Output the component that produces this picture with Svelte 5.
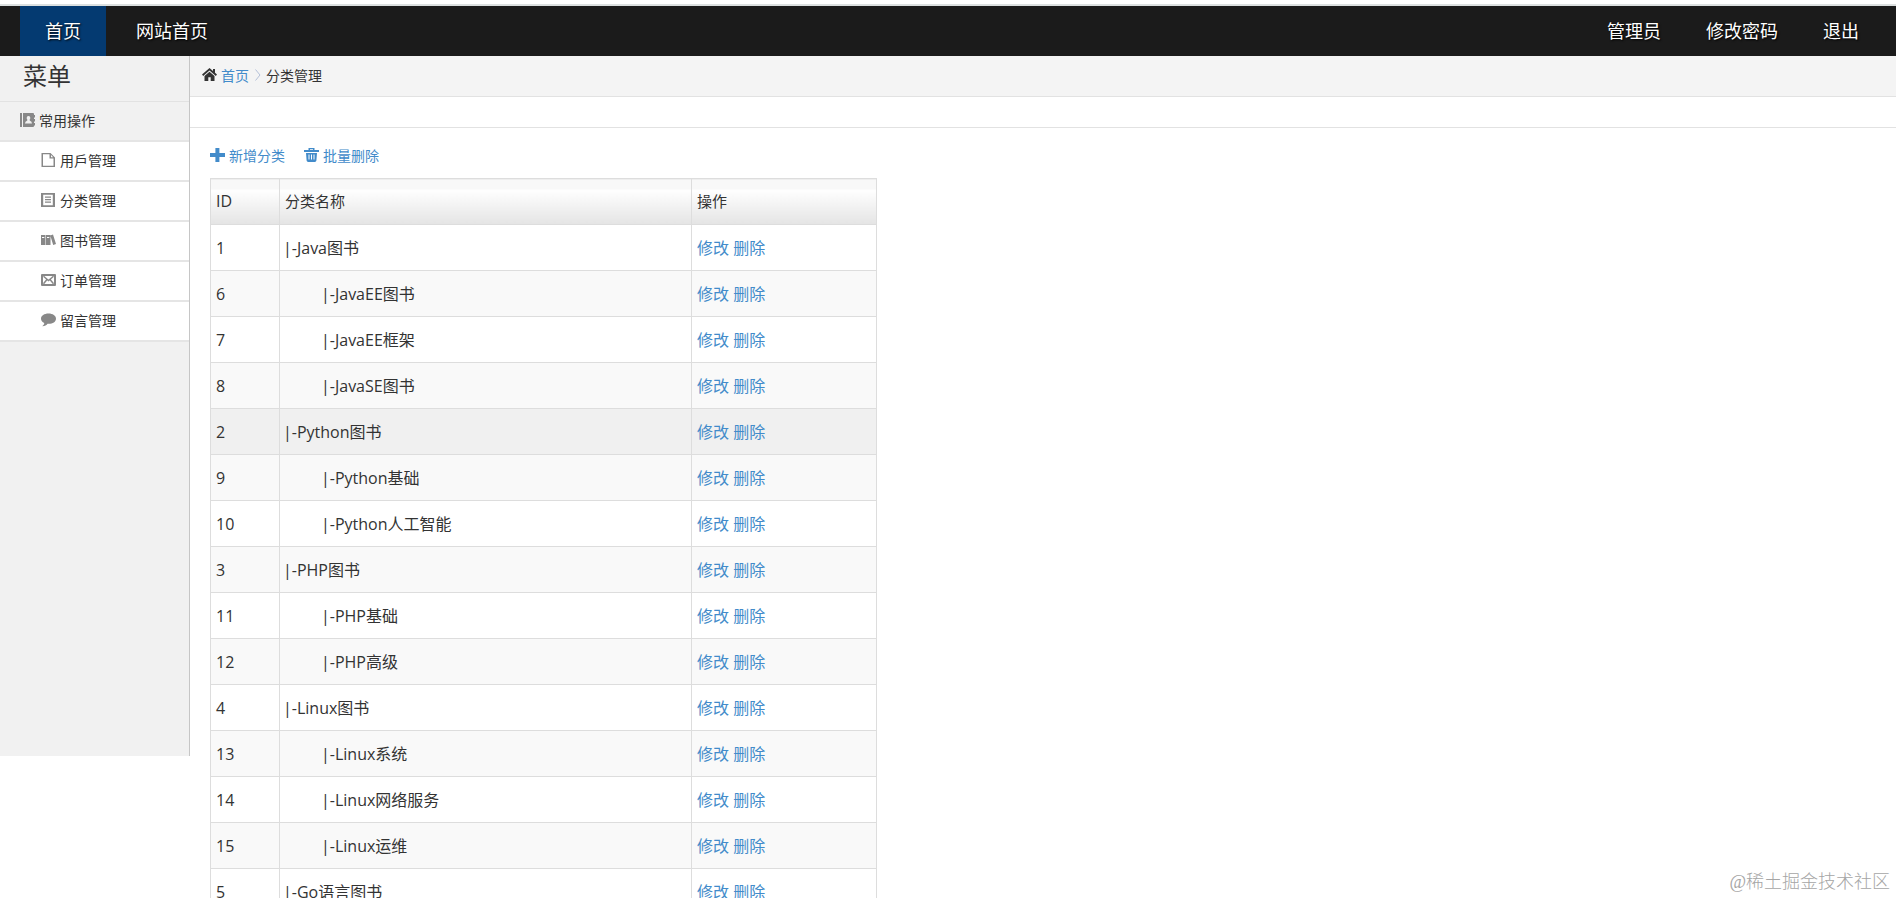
<script lang="ts">
  interface Category {
    id: number;
    name: string;
    child?: boolean;
  }

  const menu = [
    { icon: 'file', label: '用戶管理' },
    { icon: 'list', label: '分类管理' },
    { icon: 'books', label: '图书管理' },
    { icon: 'mail', label: '订单管理' },
    { icon: 'comment', label: '留言管理' }
  ];

  const account = ['管理员', '修改密码', '退出'];

  const categories: Category[] = [
    { id: 1, name: 'Java图书' },
    { id: 6, name: 'JavaEE图书', child: true },
    { id: 7, name: 'JavaEE框架', child: true },
    { id: 8, name: 'JavaSE图书', child: true },
    { id: 2, name: 'Python图书' },
    { id: 9, name: 'Python基础', child: true },
    { id: 10, name: 'Python人工智能', child: true },
    { id: 3, name: 'PHP图书' },
    { id: 11, name: 'PHP基础', child: true },
    { id: 12, name: 'PHP高级', child: true },
    { id: 4, name: 'Linux图书' },
    { id: 13, name: 'Linux系统', child: true },
    { id: 14, name: 'Linux网络服务', child: true },
    { id: 15, name: 'Linux运维', child: true },
    { id: 5, name: 'Go语言图书' }
  ];

  let activeId = $state(2);
</script>

{#snippet icon(name: string)}
  <svg class="icon" viewBox="0 0 15 14" width="15" height="14" fill="currentColor" aria-hidden="true">
    {#if name === 'home'}
      <path d="M7.500 0 0 6.600l1.200 1.300L7.500 2.500l6.300 5.400L15 6.600l-2-1.800V1h-2v2z" />
      <path d="M7.500 3.800 2.500 8v5h3.800V9.200h2.400V13h3.800V8z" />
    {:else if name === 'plus'}
      <path d="M5.400 0h4v5H15v4H9.400v5h-4V9H0V5h5.400z" />
    {:else if name === 'trash'}
      <path fill-rule="evenodd" d="M4.500 0h6v2H15v2H0V2h4.500zM6 1.200V2h3v-.8zM2 5h11l-.6 7.600q-.2 1.400-1.500 1.400H4.100q-1.300 0-1.500-1.400zM4.500 6.500v5h1v-5zm2.500 0v5h1v-5zm2.500 0v5h1v-5z" />
    {:else if name === 'contacts'}
      <path fill-rule="evenodd" d="M0 0h2v14H0zM3 0h10q1 0 1 1v1h1v2.500h-1V6h1v2.500h-1V10h1v2.500h-1V13q0 1-1 1H3zm5.500 3a1.800 2 0 0 0-1.200 3.500v1Q5 8.300 5 10.500h7q0-2.200-2.300-3v-1A1.800 2 0 0 0 8.500 3z" />
    {:else if name === 'file'}
      <path fill-rule="evenodd" d="M.5 0h9L14 4.500V14H.5zM2 1.300v11.400h10.500V5.500h-4V1.300zm8 .7v2.200h2.200z" />
    {:else if name === 'list'}
      <path fill-rule="evenodd" d="M0 0h14v14H0zM2.200 1.800v10.400h9.600V1.800zM4 3.500h6v1.200H4zm0 2.500h6v1.200H4zm0 2.500h6v1.200H4z" />
    {:else if name === 'books'}
      <path fill-rule="evenodd" d="M0 2h4.500v10H0zm1 2v1h2.300V4zM5 2h4.500v10H5zm1 2v1h2.300V4zM9.300 2.400l2.700-.9 3 9.500-2.800 1z" />
    {:else if name === 'mail'}
      <path fill-rule="evenodd" d="M1 1h13q1 0 1 1v10q0 1-1 1H1q-1 0-1-1V2q0-1 1-1zm1 2v8h11V3z" />
      <path d="m2.500 3.200 5 4.300 5-4.300M2.500 10.800 6 6.600M12.500 10.800 9 6.600" fill="none" stroke="currentColor" stroke-width="1.500" />
    {:else if name === 'comment'}
      <path d="M7.500.5C3.300.500 0 2.700 0 5.700c0 1.900 1.300 3.500 3.300 4.400-.2 1.500-1 2.500-2 3.200 2.500 0 4.300-1.100 5.300-2.500C11.300 11.200 15 9 15 5.700 15 2.700 11.700.5 7.500.5z" />
    {/if}
  </svg>
{/snippet}

<div class="page">
  <header>
    <nav>
      <a class="active" href="#home">首页</a>
      <a href="#site">网站首页</a>
    </nav>
    <nav class="account">
      {#each account as label}
        <a href="#account">{label}</a>
      {/each}
    </nav>
  </header>

  <div class="body">
    <aside>
      <h1>菜单</h1>
      <div class="group">{@render icon('contacts')}<span>常用操作</span></div>
      <ul>
        {#each menu as item}
          <li><a href="#menu">{@render icon(item.icon)}<span>{item.label}</span></a></li>
        {/each}
      </ul>
    </aside>

    <main>
      <div class="crumb">
        {@render icon('home')}
        <a href="#home">首页</a>
        <svg class="chevron" viewBox="0 0 6 12" width="6" height="12" fill="none" aria-hidden="true">
          <path d="m.5.5 4.500 5.500-4.500 5.500" stroke="#b4c0d8" />
        </svg>
        <span>分类管理</span>
      </div>
      <div class="strip"></div>

      <div class="content">
        <div class="actions">
          <a href="#add">{@render icon('plus')}新增分类</a>
          <a href="#remove">{@render icon('trash')}批量删除</a>
        </div>
        <table>
          <colgroup>
            <col class="col-id" />
            <col class="col-name" />
            <col class="col-ops" />
          </colgroup>
          <thead>
            <tr><th class="id">ID</th><th>分类名称</th><th>操作</th></tr>
          </thead>
          <tbody>
            {#each categories as row (row.id)}
              <tr class:hover={row.id === activeId} onmouseenter={() => (activeId = row.id)}>
                <td>{row.id}</td>
                <td class="name" class:child={row.child}>|-{row.name}</td>
                <td><a href="#edit">修改</a> <a href="#delete">删除</a></td>
              </tr>
            {/each}
          </tbody>
        </table>
      </div>
    </main>
  </div>

  <div class="watermark">@稀土掘金技术社区</div>
</div>

<style>
  :global(body) {
    margin: 0;
    background: #fff;
  }
  .page {
    position: relative;
    height: 898px;
    overflow: hidden;
    font-family: 'Open Sans', 'Noto Sans CJK SC', sans-serif;
    font-size: 14px;
    color: #333;
  }
  a {
    color: #428bca;
    text-decoration: none;
  }
  .icon {
    flex: none;
  }

  header {
    display: flex;
    justify-content: space-between;
    height: 50px;
    margin-top: 4px;
    padding: 0 19px 0 20px;
    border-top: 2px solid #dce0e0;
    background: #1b1b1b;
  }
  nav {
    display: flex;
    gap: 5px;
  }
  nav a {
    padding: 0 25px;
    font-size: 18px;
    line-height: 50px;
    color: #fff;
    text-shadow: 1px 1px 2px #000;
  }
  nav a.active {
    background: #043a71;
  }
  .account {
    gap: 9px;
  }
  .account a {
    padding: 0 18px;
  }

  .body {
    display: flex;
    align-items: flex-start;
  }
  aside {
    flex: none;
    box-sizing: border-box;
    width: 190px;
    height: 700px;
    border-right: 1px solid #c6c6c6;
    background: #f1f1f1;
  }
  h1 {
    height: 45px;
    margin: 0;
    padding-left: 23px;
    border-bottom: 1px solid #e2e2e2;
    font-size: 24px;
    font-weight: 400;
    line-height: 40px;
  }
  .group,
  li a {
    display: flex;
    align-items: center;
    gap: 4px;
    height: 38px;
    border-bottom: 2px solid #e5e5e5;
    color: #333;
  }
  .group {
    padding-left: 20px;
  }
  .group .icon,
  li .icon {
    margin-bottom: 2px;
    color: #888;
  }
  .group span,
  li span {
    padding-bottom: 2px;
  }
  ul {
    margin: 0;
    padding: 0;
    list-style: none;
  }
  li a {
    padding-left: 41px;
    background: #fff;
  }

  main {
    flex: 1;
  }
  .crumb {
    display: flex;
    align-items: center;
    box-sizing: border-box;
    height: 41px;
    padding: 0 0 2px 12px;
    border-bottom: 1px solid #e2e2e2;
    background: #f4f4f4;
  }
  .crumb a {
    margin: 0 6px 0 4px;
  }
  .chevron {
    margin-right: 5px;
  }
  .strip {
    height: 30px;
    border-bottom: 1px solid #e2e2e2;
  }
  .content {
    padding-left: 20px;
  }
  .actions {
    display: flex;
    gap: 19px;
    padding: 17px 0 12px;
    line-height: 21px;
  }
  .actions a {
    display: flex;
    align-items: center;
    gap: 4px;
  }
  .actions .icon {
    margin-bottom: 2px;
  }

  table {
    width: 667px;
    border-collapse: collapse;
    table-layout: fixed;
    font-size: 16px;
  }
  .col-id {
    width: 69px;
  }
  .col-name {
    width: 412px;
  }
  th,
  td {
    box-sizing: border-box;
    height: 46px;
    padding: 0 5px;
    border: 1px solid #ddd;
    line-height: 24px;
    text-align: left;
    vertical-align: middle;
  }
  th {
    padding-bottom: 2px;
    background: linear-gradient(#f8f8f8 10px, #fff 10px, #e4e4e4);
    font-size: 15px;
    font-weight: 400;
  }
  th.id {
    font-size: 16px;
  }
  tbody tr:nth-child(even) {
    background: #f9f9f9;
  }
  tbody tr.hover {
    background: #f0f0f0;
  }
  td.name {
    padding-left: 3px;
  }
  td.child {
    padding-left: 41px;
  }

  .watermark {
    position: absolute;
    right: 6px;
    bottom: 4px;
    font-family: 'Liberation Serif', 'Noto Sans CJK SC', serif;
    font-size: 18px;
    font-weight: 300;
    line-height: 24px;
    color: #a5a5a5;
  }
</style>
